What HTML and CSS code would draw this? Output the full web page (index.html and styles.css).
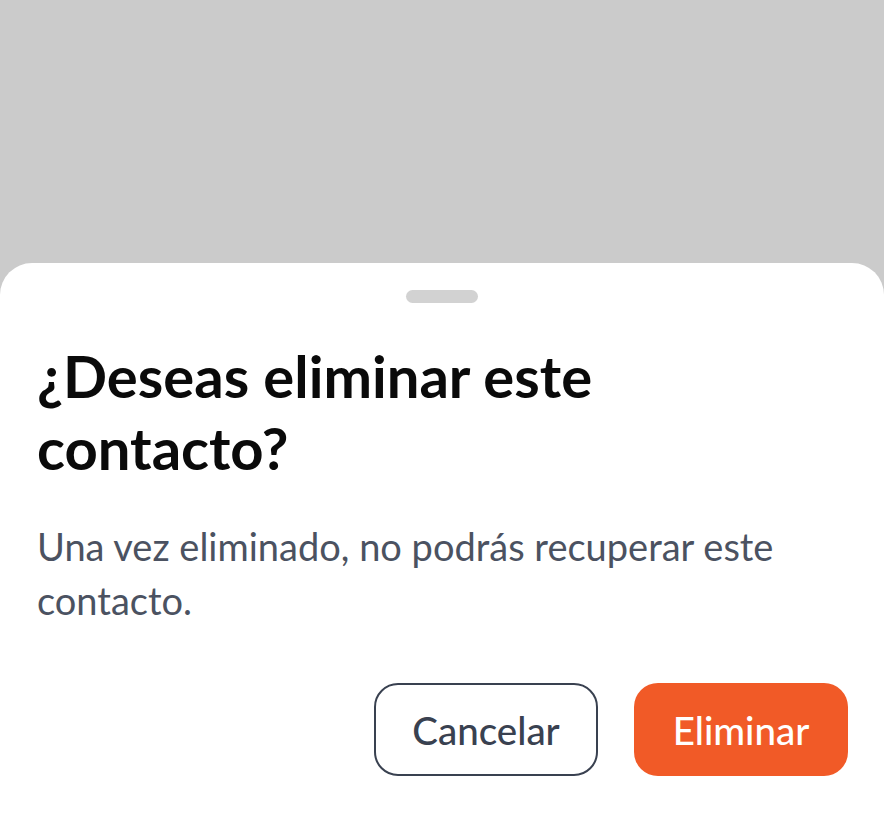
FILE: index.html
```html
<!DOCTYPE html>
<html lang="es">
<head>
<meta charset="utf-8">
<link rel="stylesheet" href="styles.css">
</head>
<body>
  <div class="backdrop"></div>
  <section class="sheet">
    <div class="handle"></div>
    <h1 class="title">¿Deseas eliminar este contacto?</h1>
    <p class="message">Una vez eliminado, no podrás recuperar este contacto.</p>
    <div class="actions">
      <button class="btn btn-outline">Cancelar</button>
      <button class="btn btn-primary">Eliminar</button>
    </div>
  </section>
</body>
</html>
```
FILE: styles.css
```css
html, body {
  margin: 0;
  padding: 0;
  height: 100%;
}
body {
  background: #cbcbcb;
  font-family: "Lato", "Noto Sans", sans-serif;
  display: flex;
  flex-direction: column;
  overflow: hidden;
}
.backdrop {
  height: 263px;
  flex: none;
}
.sheet {
  flex: 1;
  background: #ffffff;
  border-radius: 32px 32px 0 0;
  padding: 27px 36px 0 37px;
  display: flex;
  flex-direction: column;
}
.handle {
  align-self: center;
  width: 72px;
  height: 13px;
  border-radius: 7px;
  background: #d2d2d2;
  margin-left: -1px;
}
.title {
  margin: 37px 0 0 0;
  font-size: 58px;
  line-height: 72px;
  font-weight: 700;
  color: #0a0a0a;
  max-width: 620px;
}
.message {
  margin: 35px 0 0 0;
  font-size: 38px;
  line-height: 54px;
  color: #4b5261;
  max-width: 800px;
}
.actions {
  display: flex;
  justify-content: flex-end;
  gap: 36px;
  margin-top: 56px;
}
.btn {
  height: 93px;
  border-radius: 24px;
  font-family: inherit;
  font-size: 38.5px;
  font-weight: 500;
  cursor: pointer;
  box-sizing: border-box;
  padding: 0;
}
.btn-outline {
  width: 224px;
  background: #ffffff;
  border: 2px solid #394150;
  color: #394150;
}
.btn-primary {
  width: 214px;
  background: #f15a27;
  border: none;
  color: #ffffff;
}
```
